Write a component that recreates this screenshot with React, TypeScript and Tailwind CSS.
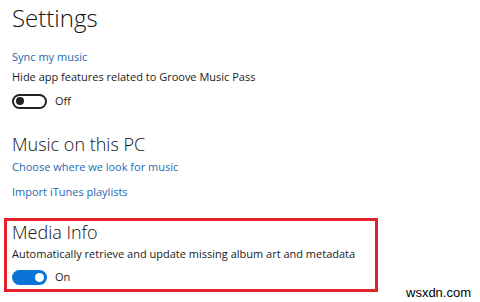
export default function App() {
  return (
    <div className="relative h-[302px] w-[480px] overflow-hidden bg-white font-['Open_Sans',sans-serif] text-[#1a1a1a]">
      <div className="flex flex-col pl-3">
        <h1 className="text-[24px] font-light leading-[36px] text-[#111]">Settings</h1>
        <a className="mt-[11px] text-[11px] leading-[20px] text-[#1d6bb4]">Sync my music</a>
        <div className="text-[11px] leading-[20px]">Hide app features related to Groove Music Pass</div>
        <Toggle on={false} label="Off" className="mt-1" />

        <h2 className="mt-[20px] text-[18px] font-light leading-[26px] text-[#111]">Music on this PC</h2>
        <a className="text-[11px] leading-[20px] text-[#1d6bb4]">Choose where we look for music</a>
        <a className="mt-[5px] text-[11px] leading-[20px] text-[#1d6bb4]">Import iTunes playlists</a>
      </div>

      <div className="ml-1 mt-[16px] flex w-[374px] flex-col border-[3px] border-[#e3202c] pb-[2px] pl-[5px]">
        <h2 className="text-[18px] font-light leading-[22px] text-[#111]">Media Info</h2>
        <div className="mt-[1px] text-[11px] leading-[20px]">
          Automatically retrieve and update missing album art and metadata
        </div>
        <Toggle on label="On" className="mt-[3px]" />
      </div>

      <div className="absolute left-[406px] top-[285px] font-['Liberation_Sans',sans-serif] text-[13px] leading-[16px] text-black">
        wsxdn.com
      </div>
    </div>
  );
}

function Toggle({ on, label, className }: { on: boolean; label: string; className?: string }) {
  return (
    <div className={`flex h-5 items-center gap-2 ${className ?? ""}`}>
      {on ? (
        <div className="flex h-[15px] w-[35px] items-center justify-end rounded-full bg-[#0a74d6] pr-[3px]">
          <div className="h-[9px] w-[9px] rounded-full bg-white" />
        </div>
      ) : (
        <div className="flex h-[15px] w-[35px] items-center rounded-full border-2 border-[#222] pl-[2px]">
          <div className="h-[8px] w-[8px] rounded-full bg-[#222]" />
        </div>
      )}
      <span className="text-[11px] leading-[20px]">{label}</span>
    </div>
  );
}
